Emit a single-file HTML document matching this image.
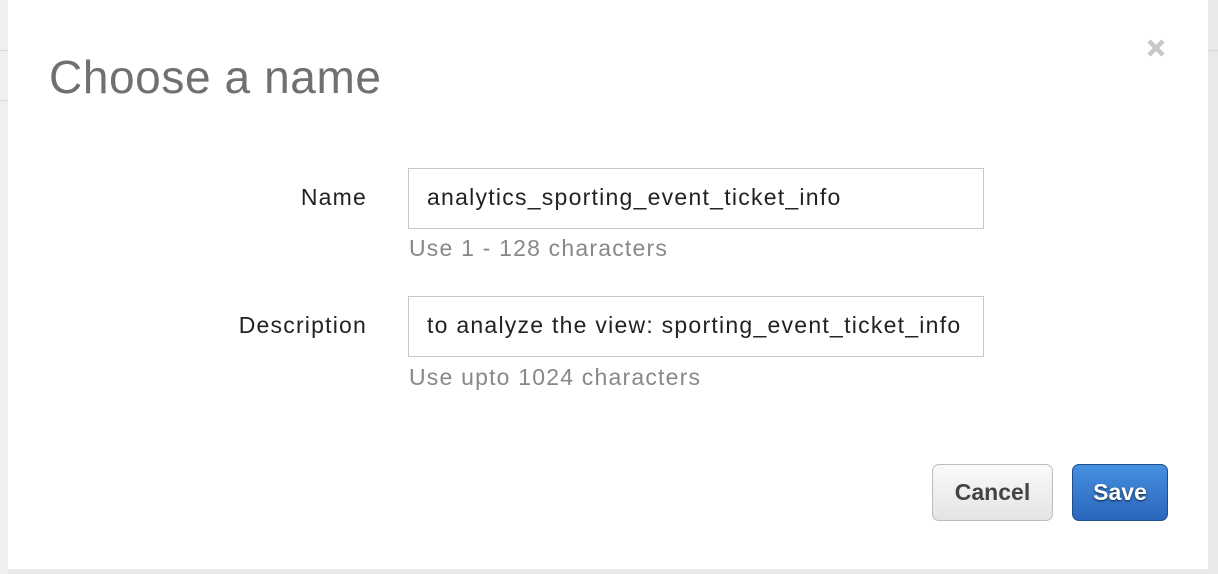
<!DOCTYPE html>
<html><head><style>
body{margin:0;width:1218px;height:574px;background:#e9e9e9;font-family:"Liberation Sans",Arial,sans-serif;position:relative;overflow:hidden}
.bgl{position:absolute;left:0;top:0;width:8px;height:574px;background:#efefef}
.ln{position:absolute;height:1px;background:#d8d8d8}
.modal{position:absolute;left:8px;top:0;width:1200px;height:569px;background:#fff}
h1{position:absolute;left:41px;top:50px;margin:0;font-weight:normal;font-size:46px;letter-spacing:0.6px;color:#707070}
.x{position:absolute;left:1138px;top:38px}
.lbl{position:absolute;right:841px;font-size:23px;letter-spacing:1.2px;color:#222}
.inp{position:absolute;left:400px;width:576px;height:61px;border:1px solid #c8c8c8;box-sizing:border-box;font-size:23px;letter-spacing:1.25px;color:#222;padding-left:18px;line-height:57px;white-space:nowrap;overflow:hidden}
.hint{position:absolute;left:401px;font-size:23px;letter-spacing:1.2px;color:#888}
.btn{position:absolute;top:464px;height:57px;box-sizing:border-box;border-radius:7px;font-weight:bold;font-size:23px;text-align:center;line-height:55px}
.c{left:924px;width:121px;border:1px solid #bdbdbd;background:linear-gradient(#fafafa,#e4e4e4);color:#444}
.s{left:1064px;width:96px;border:1px solid #1d4f8c;background:linear-gradient(#4690e0,#2a66bd);color:#fff;text-shadow:0 1px 2px #123}
</style></head><body>
<div class="bgl"></div>
<div class="ln" style="left:0;top:50px;width:8px"></div>
<div class="ln" style="left:0;top:100px;width:8px"></div>
<div class="ln" style="left:1208px;top:50px;width:10px"></div>
<div class="modal">
<h1>Choose a name</h1>
<svg class="x" width="20" height="20" viewBox="0 0 20 20"><path d="M3 3L17 17M17 3L3 17" stroke="#c8c8c8" stroke-width="4.5"/></svg>
<div class="lbl" style="top:184px">Name</div>
<div class="inp" style="top:168px">analytics_sporting_event_ticket_info</div>
<div class="hint" style="top:235px">Use 1 - 128 characters</div>
<div class="lbl" style="top:312px">Description</div>
<div class="inp" style="top:296px">to analyze the view: sporting_event_ticket_info</div>
<div class="hint" style="top:364px">Use upto 1024 characters</div>
<div class="btn c">Cancel</div>
<div class="btn s">Save</div>
</div>
</body></html>
